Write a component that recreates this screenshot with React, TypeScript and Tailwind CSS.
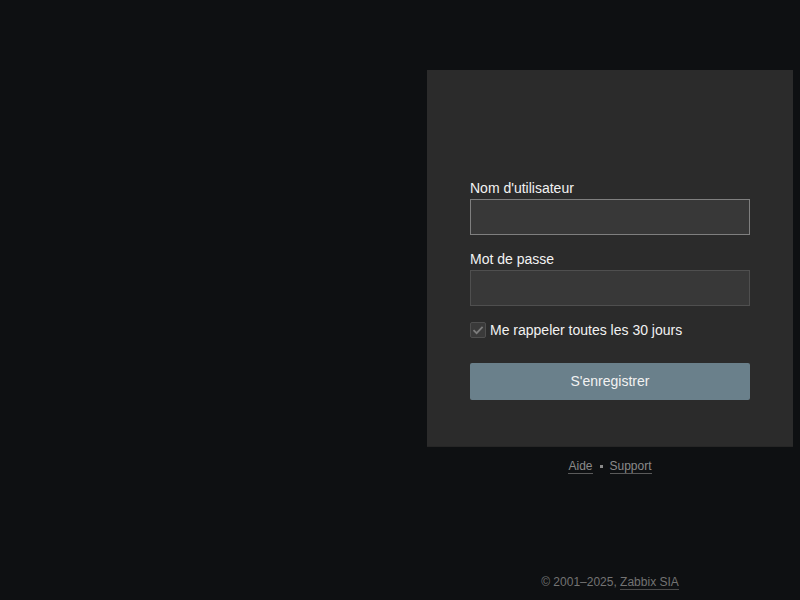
import React from "react";

export default function App() {
  return (
    <div
      className="w-[800px] h-[600px] bg-[#0e1012] overflow-hidden"
      style={{ fontFamily: '"Liberation Sans", Arial, sans-serif' }}
    >
      <div className="ml-[427px] w-[366px] pt-[70px] flex flex-col">
        <div className="bg-[#2b2b2b] border-b border-[#262626] pt-[110px] pb-[46px] px-[43px] flex flex-col">
          <label className="text-[14px] leading-[16px] text-[#f2f2f2] mb-[3px]">Nom d'utilisateur</label>
          <input
            type="text"
            className="w-[280px] h-[36px] bg-[#383838] border border-[#7f7f7f] outline-none text-[#f2f2f2] px-2"
          />
          <label className="text-[14px] leading-[16px] text-[#f2f2f2] mt-[16px] mb-[3px]">Mot de passe</label>
          <input
            type="password"
            className="w-[280px] h-[36px] bg-[#383838] border border-[#4f4f4f] outline-none text-[#f2f2f2] px-2"
          />
          <div className="flex items-center mt-[16px] h-[16px]">
            <div className="w-[16px] h-[16px] rounded-[2px] border border-[#4f4f4f] bg-[#3a3a3a] flex items-center justify-center">
              <svg width="14" height="14" viewBox="0 0 14 14">
                <path d="M2.5 7.2 L5.6 10.2 L11.6 3.8" fill="none" stroke="#7c7c7c" strokeWidth="1.8" />
              </svg>
            </div>
            <span className="ml-[4px] text-[14px] leading-[16px] text-[#f2f2f2]">Me rappeler toutes les 30 jours</span>
          </div>
          <button className="mt-[25px] w-[280px] h-[37px] bg-[#6a808b] rounded-[2px] text-[14px] text-[#f2f2f2]">
            S'enregistrer
          </button>
        </div>
        <div className="mt-[12px] flex justify-center items-center text-[12px] leading-[14px] text-[#8a8a8a]">
          <span className="border-b border-[#5a5a5a]">Aide</span>
          <span className="mx-[7px] w-[3px] h-[3px] bg-[#8a8a8a]"></span>
          <span className="border-b border-[#5a5a5a]">Support</span>
        </div>
        <div className="mt-[101px] flex justify-center text-[12px] leading-[14px] text-[#737373]">
          <span>© 2001–2025,&nbsp;</span>
          <span className="border-b border-[#4a4a4a]">Zabbix SIA</span>
        </div>
      </div>
    </div>
  );
}
